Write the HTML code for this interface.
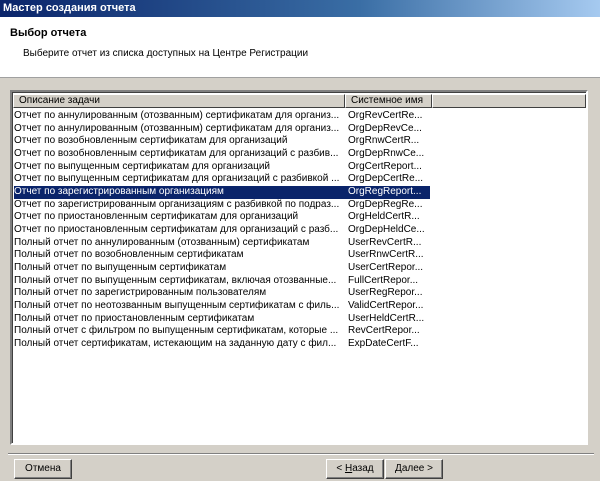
<!DOCTYPE html>
<html><head><meta charset="utf-8"><style>
body{margin:0;width:600px;height:481px;background:#d4d0c8;font-family:"Liberation Sans",sans-serif;font-size:10px;position:relative;overflow:hidden;color:#000}
.t{position:absolute;left:0;top:0;width:600px;height:17px;background:linear-gradient(90deg,#0a246a,#3a6ea5 60%,#a6caf0);color:#fff;font-weight:bold;font-size:11px;line-height:17px;padding-left:3px;box-sizing:border-box}
.hd{position:absolute;left:0;top:17px;width:600px;height:60px;background:#fff;border-bottom:1px solid #a0a0a0}
.hd b{position:absolute;left:10px;top:10px;font-size:11px}
.hd span{position:absolute;left:23px;top:31px}
.lv{position:absolute;left:10px;top:90px;width:578px;height:355px;background:#fff;border:2px solid;border-color:#808080 #fff #fff #808080;box-sizing:border-box;box-shadow:inset 1px 1px 0 #404040}
.h{position:absolute;top:2px;height:14px;background:#d4d0c8;border:1px solid;border-color:#fff #404040 #404040 #fff;box-sizing:border-box;line-height:12px;padding-left:5px}
.r{position:absolute;left:2px;height:12.67px;line-height:12.67px;white-space:nowrap;width:572px}
.r s{text-decoration:none;display:inline-block;width:330px;overflow:hidden;vertical-align:top}
.r i{font-style:normal;position:absolute;left:334px}
.sel{background:#0a246a;color:#fff;width:416px}
.sep{position:absolute;left:8px;top:453px;width:586px;border-top:1px solid #808080;border-bottom:1px solid #fff}
.b{position:absolute;top:459px;height:20px;width:58px;background:#d4d0c8;border:1px solid;border-color:#fff #404040 #404040 #fff;box-sizing:border-box;text-align:center;line-height:18px;box-shadow:inset -1px -1px 0 #808080}
</style></head><body>
<div class="t">Мастер создания отчета</div>
<div class="hd"><b>Выбор отчета</b><span>Выберите отчет из списка доступных на Центре Регистрации</span></div>
<div class="lv">
<div class="h" style="left:1px;width:332px">Описание задачи</div>
<div class="h" style="left:333px;width:87px">Системное имя</div>
<div class="h" style="left:420px;width:154px"></div>
<div style="position:absolute;left:0;top:18px;width:100%">
<div class="r" style="top:0"><s>Отчет по аннулированным (отозванным) сертификатам для организ...</s><i>OrgRevCertRe...</i></div>
<div class="r" style="top:12.67px"><s>Отчет по аннулированным (отозванным) сертификатам для организ...</s><i>OrgDepRevCe...</i></div>
<div class="r" style="top:25.33px"><s>Отчет по возобновленным сертификатам для организаций</s><i>OrgRnwCertR...</i></div>
<div class="r" style="top:38px"><s>Отчет по возобновленным сертификатам для организаций с разбив...</s><i>OrgDepRnwCe...</i></div>
<div class="r" style="top:50.67px"><s>Отчет по выпущенным сертификатам для организаций</s><i>OrgCertReport...</i></div>
<div class="r" style="top:63.33px"><s>Отчет по выпущенным сертификатам для организаций с разбивкой ...</s><i>OrgDepCertRe...</i></div>
<div class="r sel" style="top:76px"><s>Отчет по зарегистрированным организациям</s><i>OrgRegReport...</i></div>
<div class="r" style="top:88.67px"><s>Отчет по зарегистрированным организациям с разбивкой по подраз...</s><i>OrgDepRegRe...</i></div>
<div class="r" style="top:101.33px"><s>Отчет по приостановленным сертификатам для организаций</s><i>OrgHeldCertR...</i></div>
<div class="r" style="top:114px"><s>Отчет по приостановленным сертификатам для организаций с разб...</s><i>OrgDepHeldCe...</i></div>
<div class="r" style="top:126.67px"><s>Полный отчет по аннулированным (отозванным) сертификатам</s><i>UserRevCertR...</i></div>
<div class="r" style="top:139.33px"><s>Полный отчет по возобновленным сертификатам</s><i>UserRnwCertR...</i></div>
<div class="r" style="top:152px"><s>Полный отчет по выпущенным сертификатам</s><i>UserCertRepor...</i></div>
<div class="r" style="top:164.67px"><s>Полный отчет по выпущенным сертификатам, включая отозванные...</s><i>FullCertRepor...</i></div>
<div class="r" style="top:177.33px"><s>Полный отчет по зарегистрированным пользователям</s><i>UserRegRepor...</i></div>
<div class="r" style="top:190px"><s>Полный отчет по неотозванным выпущенным сертификатам с филь...</s><i>ValidCertRepor...</i></div>
<div class="r" style="top:202.67px"><s>Полный отчет по приостановленным сертификатам</s><i>UserHeldCertR...</i></div>
<div class="r" style="top:215.33px"><s>Полный отчет с фильтром по выпущенным сертификатам, которые ...</s><i>RevCertRepor...</i></div>
<div class="r" style="top:228px"><s>Полный отчет сертификатам, истекающим на заданную дату с фил...</s><i>ExpDateCertF...</i></div>
</div></div>
<div class="sep"></div>
<div class="b" style="left:14px">Отмена</div>
<div class="b" style="left:326px">&lt; <u>Н</u>азад</div>
<div class="b" style="left:385px"><u>Д</u>алее &gt;</div>
</body></html>
